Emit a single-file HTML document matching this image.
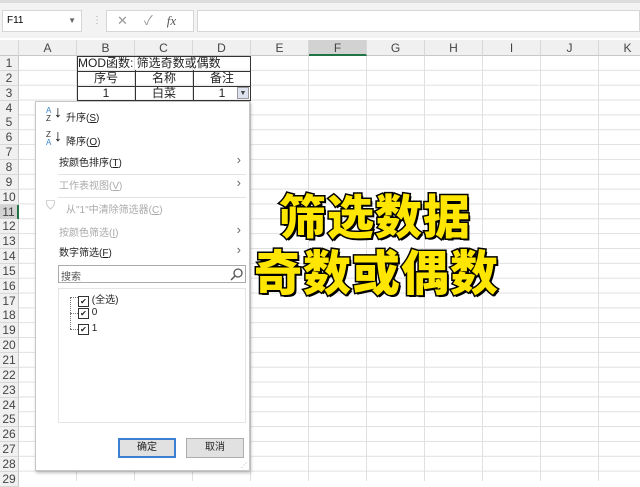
<!DOCTYPE html><html><head><meta charset="utf-8"><style>
body{margin:0;width:640px;height:481px;overflow:hidden;background:#fff;font-family:"Liberation Sans","Noto Sans CJK SC",sans-serif;position:relative}
.a{position:absolute}
.top{left:0;top:0;width:640px;height:38px;background:#f3f3f3;border-top:3px solid #ddd;box-sizing:border-box}
.box{background:#fff;border:1px solid #d6d6d6;box-sizing:border-box}
.ch{top:40px;height:16px;background:#f0f0f0;border-bottom:1px solid #c8c8c8;box-sizing:border-box;font-size:12px;color:#444;text-align:center;line-height:16px;border-right:1px solid #d8d8d8}
.rh{left:0;width:19px;height:15px;background:#f0f0f0;border-right:1px solid #c8c8c8;box-sizing:border-box;font-size:12px;color:#444;text-align:center;line-height:15px;border-bottom:1px solid #d8d8d8}
.grid{left:19px;top:56px;width:621px;height:425px;background-image:linear-gradient(#e0e0e0 1px,transparent 1px),linear-gradient(90deg,#e0e0e0 1px,transparent 1px);background-size:58px 14.85px;background-position:-1px -1px}
.cell{font-size:12px;color:#222;text-align:center;line-height:15px;height:15px}
.m{font-size:10px;color:#222}
.g{color:#aaa}
.big{font-weight:900;color:#ffe600;-webkit-text-stroke:3px #000;paint-order:stroke fill;text-shadow:2px 2px 0 #000;font-family:"Noto Sans CJK SC",sans-serif;white-space:nowrap}
.arr{right:8px;font-size:13px;color:#666}
</style></head><body>
<div class="a top"></div>
<div class="a box" style="left:2px;top:10px;width:80px;height:22px;font-size:10px;line-height:20px;padding-left:4px">F11<span style="position:absolute;right:5px;font-size:8px;color:#666">▼</span></div>
<div class="a" style="left:92px;top:15px;color:#aaa;font-size:10px">⋮</div>
<div class="a box" style="left:106px;top:10px;width:88px;height:22px;color:#999;font-size:13px;line-height:20px"><span style="margin-left:10px">✕</span><span style="margin-left:16px">✓</span><span style="margin-left:14px;font-style:italic;font-family:'Liberation Serif';color:#555">fx</span></div>
<div class="a box" style="left:197px;top:10px;width:443px;height:22px"></div>
<div class="a grid"></div>
<div class="a ch" style="left:0;width:19px"></div>
<div class="a ch" style="left:19px;width:58px">A</div><div class="a ch" style="left:77px;width:58px">B</div><div class="a ch" style="left:135px;width:58px">C</div><div class="a ch" style="left:193px;width:58px">D</div><div class="a ch" style="left:251px;width:58px">E</div><div class="a ch" style="left:309px;width:58px;background:#d2d2d2;border-bottom:2px solid #217346">F</div><div class="a ch" style="left:367px;width:58px">G</div><div class="a ch" style="left:425px;width:58px">H</div><div class="a ch" style="left:483px;width:58px">I</div><div class="a ch" style="left:541px;width:58px">J</div><div class="a ch" style="left:599px;width:58px">K</div>
<div id="rows"></div>
<script>
var h='';for(var i=1;i<=29;i++){var t=56+(i-1)*14.85;h+='<div class="a rh" style="top:'+t+'px;'+(i==11?'background:#d2d2d2;border-right:2px solid #217346':'')+'">'+i+'</div>'}document.getElementById('rows').innerHTML=h;
</script>
<div class="a" style="left:77px;top:56px;width:174px;height:45px;border:1px solid #333;box-sizing:border-box;background:linear-gradient(#333,#333) 0 14px/100% 1px no-repeat,linear-gradient(#333,#333) 0 29px/100% 1px no-repeat"></div>
<div class="a" style="left:135px;top:70px;width:1px;height:31px;background:#333"></div>
<div class="a" style="left:193px;top:70px;width:1px;height:31px;background:#333"></div>
<div class="a cell" style="left:78px;top:56px;text-align:left">MOD函数: 筛选奇数或偶数</div>
<div class="a cell" style="left:77px;top:71px;width:58px">序号</div><div class="a cell" style="left:135px;top:71px;width:58px">名称</div><div class="a cell" style="left:193px;top:71px;width:58px">备注</div>
<div class="a cell" style="left:77px;top:86px;width:58px">1</div><div class="a cell" style="left:135px;top:86px;width:58px">白菜</div><div class="a cell" style="left:193px;top:86px;width:58px">1</div>
<div class="a" style="left:237px;top:87px;width:12px;height:12px;background:#dde3ee;border:1px solid #999;box-sizing:border-box;font-size:7px;text-align:center;line-height:11px;color:#444">▼</div>
<div class="a" style="left:35px;top:101px;width:215px;height:370px;background:#fff;border:1px solid #c6c6c6;box-shadow:1px 2px 3px rgba(0,0,0,.25);box-sizing:border-box">
<div class="a m" style="left:10px;top:5px;width:12px;font-size:8px;line-height:8px;color:#3b7fc4">A<br><span style="color:#333">Z</span></div><div class="a" style="left:18px;top:2px;font-size:16px">↓</div><div class="a m" style="left:30px;top:7px">升序(<u>S</u>)</div>
<div class="a m" style="left:10px;top:29px;width:12px;font-size:8px;line-height:8px;color:#333">Z<br><span style="color:#3b7fc4">A</span></div><div class="a" style="left:18px;top:26px;font-size:16px">↓</div><div class="a m" style="left:30px;top:31px">降序(<u>O</u>)</div>
<div class="a m" style="left:23px;top:52px">按颜色排序(<u>T</u>)</div><div class="a arr" style="top:50px">›</div>
<div class="a" style="left:22px;top:72px;width:188px;height:1px;background:#e2e2e2"></div>
<div class="a m g" style="left:23px;top:75px">工作表视图(<u>V</u>)</div><div class="a arr g" style="top:73px">›</div>
<div class="a" style="left:22px;top:95px;width:188px;height:1px;background:#e2e2e2"></div>
<div class="a g" style="left:10px;top:96px;font-size:12px">⛉</div><div class="a m g" style="left:30px;top:99px">从"1"中清除筛选器(<u>C</u>)</div>
<div class="a m g" style="left:23px;top:122px">按颜色筛选(<u>I</u>)</div><div class="a arr g" style="top:120px">›</div>
<div class="a m" style="left:23px;top:142px">数字筛选(<u>F</u>)</div><div class="a arr" style="top:140px">›</div>
<div class="a" style="left:22px;top:163px;width:188px;height:18px;border:1px solid #aaa;box-sizing:border-box"><span class="m" style="position:absolute;left:2px;top:2px;color:#555">搜索</span><svg style="position:absolute;right:2px;top:2px" width="13" height="13"><circle cx="8" cy="5" r="4" fill="none" stroke="#555" stroke-width="1.3"/><line x1="5" y1="8" x2="1" y2="12" stroke="#555" stroke-width="1.5"/></svg></div>
<div class="a" style="left:22px;top:186px;width:188px;height:135px;border:1px solid #e4e4e4;box-sizing:border-box">
<div class="a" style="left:11px;top:8px;width:1px;height:32px;border-left:1px dotted #777"></div>
<div class="a" style="left:11px;top:8px;width:8px;border-top:1px dotted #777"></div><div class="a" style="left:11px;top:24px;width:8px;border-top:1px dotted #777"></div><div class="a" style="left:11px;top:40px;width:8px;border-top:1px dotted #777"></div>
<div class="a m" style="left:19px;top:2px"><span style="display:inline-block;width:9px;height:9px;border:1px solid #333;font-size:8px;line-height:9px;text-align:center;vertical-align:-1px">✔</span> (全选)</div>
<div class="a m" style="left:19px;top:18px"><span style="display:inline-block;width:9px;height:9px;border:1px solid #333;font-size:8px;line-height:9px;text-align:center;vertical-align:-1px">✔</span> 0</div>
<div class="a m" style="left:19px;top:34px"><span style="display:inline-block;width:9px;height:9px;border:1px solid #333;font-size:8px;line-height:9px;text-align:center;vertical-align:-1px">✔</span> 1</div>
</div>
<div class="a m" style="left:82px;top:336px;width:58px;height:20px;background:#e1e1e1;border:2px solid #3d7fd0;box-sizing:border-box;text-align:center;line-height:16px">确定</div>
<div class="a m" style="left:150px;top:336px;width:58px;height:20px;background:#e1e1e1;border:1px solid #adadad;box-sizing:border-box;text-align:center;line-height:18px">取消</div>
<div class="a" style="right:2px;bottom:1px;font-size:6px;color:#999">⋰</div>
</div>
<div class="a big" style="left:279px;top:183px;font-size:47px;letter-spacing:1px;line-height:62px">筛选数据</div>
<div class="a big" style="left:254px;top:238px;font-size:48px;letter-spacing:1px;line-height:62px">奇数或偶数</div>
</body></html>
